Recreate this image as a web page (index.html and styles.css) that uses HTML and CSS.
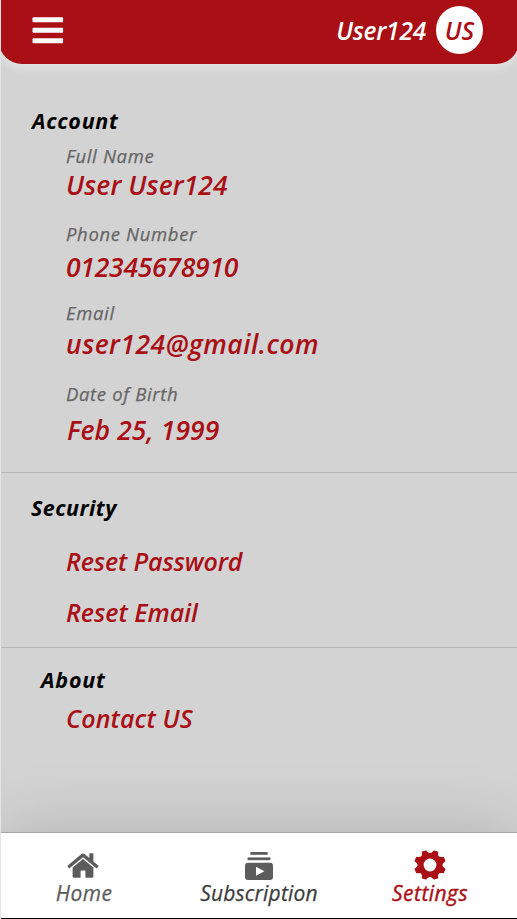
FILE: index.html
```html
<!DOCTYPE html>
<html lang="en">
<head>
<meta charset="utf-8">
<title>Settings</title>
<link rel="stylesheet" href="styles.css">
</head>
<body>
<div class="app">
  <header class="topbar">
    <svg class="menu" width="32" height="28" viewBox="0 0 32 28" fill="#fff"><rect x=".5" y="1.2" width="30.6" height="5" rx="1"/><rect x=".5" y="11.7" width="30.6" height="5" rx="1"/><rect x=".5" y="22.3" width="30.6" height="5" rx="1"/></svg>
    <span class="username">User124</span>
    <span class="avatar">US</span>
  </header>
  <main class="content">
    <section class="account">
      <h2 class="heading">Account</h2>
      <dl class="fields">
        <dt class="label name-label">Full Name</dt>
        <dd class="value name">User User124</dd>
        <dt class="label phone-label">Phone Number</dt>
        <dd class="value phone">012345678910</dd>
        <dt class="label email-label">Email</dt>
        <dd class="value email">user124@gmail.com</dd>
        <dt class="label birth-label">Date of Birth</dt>
        <dd class="value birth">Feb 25, 1999</dd>
      </dl>
    </section>
    <section class="security">
      <h2 class="heading">Security</h2>
      <a class="link password">Reset Password</a>
      <a class="link reset-email">Reset Email</a>
    </section>
    <section class="about">
      <h2 class="heading">About</h2>
      <a class="link contact">Contact US</a>
    </section>
  </main>
  <nav class="tabs">
    <a class="tab home">
      <svg width="32" height="26" viewBox="0 0 32 26" fill="#5c5c5c"><path d="M14.2 1.2 Q16 0 17.8 1.2 L22.3 5 V.8 Q22.3 .2 23 .2 H25.8 Q26.4 .2 26.4 .8 V8.4 L31.2 12.5 Q31.8 13 31.3 13.6 L30.2 14.9 Q29.7 15.4 29.1 14.9 L16 4.2 L2.9 14.9 Q2.3 15.4 1.8 14.9 L.7 13.6 Q.2 13 .8 12.5Z"/><path d="M16 6 L26.4 14.5 V23.5 Q26.4 24.8 25.1 24.8 H19 Q18.4 24.8 18.4 24.2 V18 Q18.4 17.4 17.8 17.4 H14.2 Q13.6 17.4 13.6 18 V24.2 Q13.6 24.8 13 24.8 H6.9 Q5.6 24.8 5.6 23.5 V14.5Z"/></svg>
      <span>Home</span>
    </a>
    <a class="tab subscription">
      <svg width="28" height="28" viewBox="0 0 28 28"><g fill="#5c5c5c"><rect x="5.4" y="0" width="17.2" height="2.8"/><rect x="2.6" y="5.4" width="22.8" height="2.8"/><rect x="0" y="10.8" width="28" height="17.2" rx="3"/></g><path d="M11 14.8 V23.8 L19.4 19.3Z" fill="#fff"/></svg>
      <span>Subscription</span>
    </a>
    <a class="tab settings">
      <svg width="32" height="30" viewBox="-16 -15 32 30"><path fill="#a90f15" stroke="#a90f15" stroke-width="1.2" stroke-linejoin="round" d="M-7.6 -13 L-4 -14 Q0 -8.6 4 -14 L7.6 -13 Q6.2 -6.2 13.4 -7.6 L14.8 -4 Q8.8 0 14.8 4 L13.4 7.6 Q6.2 6.2 7.6 13 L4 14 Q0 8.6 -4 14 L-7.6 13 Q-6.2 6.2 -13.4 7.6 L-14.8 4 Q-8.8 0 -14.8 -4 L-13.4 -7.6 Q-6.2 -6.2 -7.6 -13Z"/><circle r="6.4" fill="#fff"/></svg>
      <span>Settings</span>
    </a>
  </nav>
</div>
</body>
</html>
```
FILE: styles.css
```css
* { box-sizing: border-box; }
body { margin: 0; background: #e4e4e4; font-family: "Open Sans", "Noto Sans", sans-serif; font-style: italic; }
.app { height: 919px; margin-left: 1px; display: flex; flex-direction: column; background: #d3d3d3; border-bottom: 1px solid #000; overflow: hidden; }
.topbar { flex: none; height: 64px; margin: 0 -2px; padding: 0 36px 4px 33px; display: flex; align-items: center; background: #a90f15; border-radius: 0 0 23px 23px; box-shadow: 0 4px 9px rgba(255,255,255,.4); color: #fff; font-weight: 600; font-size: 24.5px; }
.menu { margin-right: auto; }
.username { margin-right: 10px; letter-spacing: -.2px; }
.avatar { width: 47px; height: 48px; border-radius: 50%; background: #fff; color: #a90f15; display: flex; align-items: center; justify-content: center; }
.content { flex: 1; display: flex; flex-direction: column; }
.heading, .label, .value, .link { display: block; margin: 0; line-height: 30px; white-space: nowrap; }
.heading { font-size: 21.5px; font-weight: 700; padding-left: 31px; letter-spacing: .7px; }
.fields { margin: 5px 0 0; padding-left: 65px; }
.label { font-size: 18.5px; font-weight: 400; color: #666; letter-spacing: .65px; -webkit-text-stroke: .25px #666; }
.value { font-size: 26.5px; font-weight: 600; color: #a90f15; letter-spacing: .1px; }
.link { font-size: 25px; font-weight: 600; color: #a90f15; padding-left: 65px; }
.account { height: 409px; padding-top: 42px; border-bottom: 1px solid #b8b8b8; }
.name { margin-top: -1px; }
.phone-label { margin-top: 19px; }
.phone { margin-top: 3px; letter-spacing: -.25px; }
.email-label { margin-top: 16px; }
.email { margin-top: 1px; letter-spacing: .5px; }
.birth-label { margin-top: 20px; }
.birth { margin-top: 6px; padding-left: 1px; }
.security { height: 175px; padding-top: 20px; border-bottom: 1px solid #b8b8b8; }
.security .heading { padding-left: 30px; letter-spacing: .45px; }
.password { margin-top: 23px; letter-spacing: -.12px; }
.reset-email { margin-top: 21px; }
.about { padding-top: 17px; }
.about .heading { padding-left: 40px; letter-spacing: .8px; }
.contact { margin-top: 8px; letter-spacing: .15px; }
.tabs { flex: none; height: 86px; display: grid; grid-template-columns: 167px 182px 167px; background: #fff; border-top: 1px solid #a6a6a6; box-shadow: 0 0 70px 0 rgba(0,0,0,.17); font-size: 21px; line-height: 28px; letter-spacing: .45px; }
.tab { display: flex; flex-direction: column; align-items: center; padding-top: 19px; }
.tab svg { flex: none; }
.tab span { -webkit-text-stroke: .25px currentColor; }
.home { color: #5c5c5c; padding-top: 20px; padding-right: 1px; }
.home svg { margin-right: 3px; }
.subscription { color: #3c3c3c; letter-spacing: .2px; }
.subscription span { margin-top: -1px; }
.settings { color: #a90f15; padding-top: 17px; padding-right: 7px; }
.settings span { margin-top: -1px; -webkit-text-stroke-width: .4px; }
```
